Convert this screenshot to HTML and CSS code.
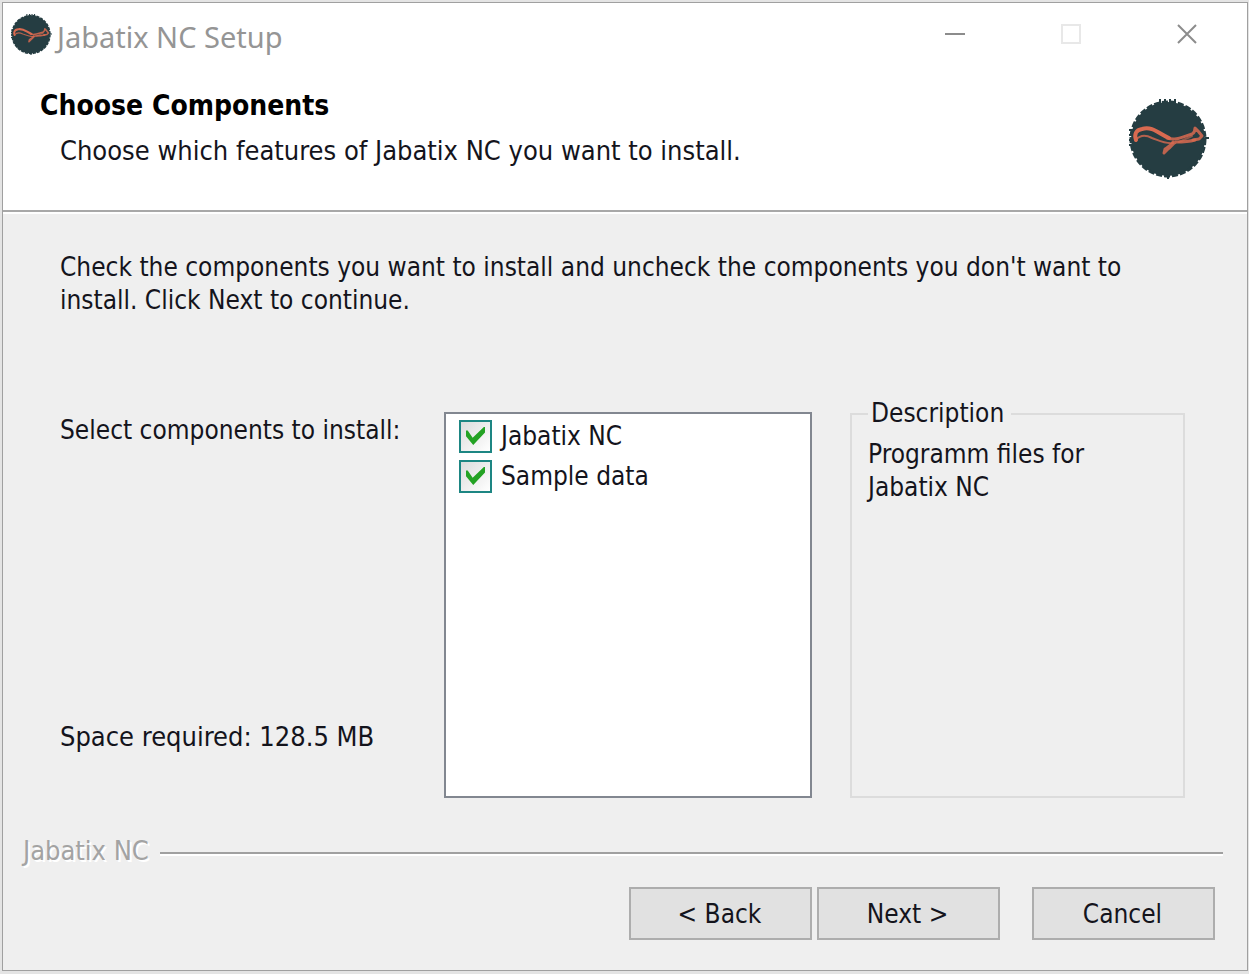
FILE: index.html
```html
<!DOCTYPE html>
<html lang="en">
<head>
  <meta charset="UTF-8">
  <meta name="viewport" content="width=device-width, initial-scale=1.0">
  <title>Jabatix NC Setup</title>
  <link rel="stylesheet" href="styles.css">
</head>
<body>
  <svg class="defs" aria-hidden="true">
    <symbol id="logo" viewBox="0 0 80 80">
      <circle cx="39" cy="40" r="37" fill="#253d42"/>
      <circle cx="39" cy="40" r="37" fill="none" stroke="#253d42" stroke-width="3" stroke-dasharray="6 2"/>
      <path stroke="#253d42" stroke-width="2" d="M31 0v4M36 0v4M41 0v4M46 0v4M0 31h4M0 36h4M0 41h4M0 46h4M76 39h4M39 76v4"/>
      <g fill="none" stroke="#d96a50" stroke-linecap="round" stroke-linejoin="round">
        <path stroke-width="4" d="M7 41c-2-6 0-10 6-11 11-3 17 5 27 9"/>
        <path stroke-width="2" d="M7 41c4-5 10-5 16-2 8 3 13 6 21 5" opacity=".8"/>
        <path stroke-width="3" d="M38 39c9 3 15-1 25-4 2-1 3-3 3-6l3 3 4 5-3 3-6 1" opacity=".85"/>
        <path stroke-width="3" d="M66 41c-7 2-13 2-19 2-3 1-5 5-8 7l-4 4 1-4c3-2 7-4 8-7" opacity=".85"/>
        <path stroke-width="2" d="M50 43l13-6" opacity=".6"/>
      </g>
    </symbol>
  </svg>

  <div class="window">
    <div class="titlebar">
      <svg class="titlebar-icon"><use href="#logo"/></svg>
      <span class="titlebar-text">Jabatix NC Setup</span>
      <button class="caption-btn" type="button" aria-label="Minimize">
        <svg viewBox="0 0 20 20"><path d="M0 10h20"/></svg>
      </button>
      <button class="caption-btn" type="button" aria-label="Maximize" disabled>
        <svg viewBox="0 0 20 20"><path d="M1 1h18v18H1z"/></svg>
      </button>
      <button class="caption-btn" type="button" aria-label="Close">
        <svg viewBox="0 0 20 20"><path d="M1 1l18 18M19 1L1 19"/></svg>
      </button>
    </div>

    <div class="header">
      <div>
        <h1>Choose Components</h1>
        <p>Choose which features of Jabatix NC you want to install.</p>
      </div>
      <svg class="header-logo"><use href="#logo"/></svg>
    </div>

    <div class="content">
      <p class="intro">Check the components you want to install and uncheck the components you don't want to install. Click Next to continue.</p>
      <div class="columns">
        <div class="info">
          <p id="list-label">Select components to install:</p>
          <p class="space">Space required: 128.5 MB</p>
        </div>
        <div class="list" role="group" aria-labelledby="list-label">
          <label><input type="checkbox" checked>Jabatix NC</label>
          <label><input type="checkbox" checked>Sample data</label>
        </div>
        <fieldset class="description">
          <legend>Description</legend>
          <p>Programm files for Jabatix NC</p>
        </fieldset>
      </div>
    </div>

    <div class="branding"><span>Jabatix NC</span></div>

    <div class="buttons">
      <button class="btn" type="button">&lt; Back</button>
      <button class="btn" type="button">Next &gt;</button>
      <button class="btn btn-cancel" type="button">Cancel</button>
    </div>
  </div>
</body>
</html>
```
FILE: styles.css
```css
* {
  box-sizing: border-box;
}

body {
  margin: 0;
  padding: 2px 1px 3px 2px;
  min-height: 100vh;
  display: flex;
  background: #e4e4e4;
  font-family: "DejaVu Sans Condensed", "DejaVu Sans", sans-serif;
  font-size: 26px;
  line-height: 33px;
  color: #14141c;
}

h1,
p {
  margin: 0;
}

.defs {
  position: absolute;
  width: 0;
  height: 0;
}

.window {
  flex: 1;
  display: flex;
  flex-direction: column;
  border: 1px solid #a0a0a0;
  background: #efefef;
}

.titlebar {
  display: flex;
  height: 64px;
  padding-left: 8px;
  background: #fff;
}

.titlebar-icon {
  width: 41px;
  height: 41px;
  margin-top: 11px;
}

.titlebar-text {
  flex: 1;
  padding: 16px 0 0 5px;
  font-family: "Noto Sans", sans-serif;
  font-size: 29px;
  line-height: 36px;
  color: #959595;
}

.caption-btn {
  width: 116px;
  padding: 0 4px 0 0;
  border: 0;
  background: none;
}

.caption-btn svg {
  width: 20px;
  height: 20px;
  fill: none;
  stroke: #8c8c8c;
  stroke-width: 2;
}

.caption-btn:disabled svg {
  stroke: #e8e8e8;
}

.header {
  display: flex;
  justify-content: space-between;
  height: 143px;
  padding: 22px 38px 0 37px;
  background: #fff;
}

.header h1 {
  font-size: 28px;
  line-height: 33px;
  color: #000;
}

.header p {
  padding: 12px 0 0 20px;
  font-size: 27px;
}

.header-logo {
  width: 80px;
  height: 80px;
  margin-top: 10px;
}

.content {
  flex: 1;
  display: flex;
  flex-direction: column;
  padding: 39px 62px 0 57px;
  border-top: 2px solid #a8a8a8;
  box-shadow: inset 0 2px #fff;
}

.intro {
  padding-right: 20px;
}

.columns {
  flex: 1;
  display: grid;
  grid-template-columns: 346fr 368fr 335fr;
  column-gap: 38px;
  margin-top: 95px;
}

.info {
  display: flex;
  flex-direction: column;
  justify-content: space-between;
  margin-right: -38px;
  padding: 2px 0 45px;
}

.space {
  font-size: 27px;
}

.list {
  padding: 2px 13px;
  border: 2px solid #828790;
  background: #fff;
}

.list label {
  display: flex;
  align-items: center;
  height: 40px;
}

.list input {
  appearance: none;
  width: 33px;
  height: 33px;
  margin: 0 9px 0 0;
  border: 2px solid #1d8683;
  background: linear-gradient(135deg, #dcdcdc, #fff);
  display: grid;
  place-items: center;
}

.list input:checked::before {
  content: "";
  width: 19px;
  height: 18px;
  background: #23a223;
  clip-path: polygon(0 20%, 9% 20%, 35% 60%, 94% 0, 100% 0, 100% 30%, 38% 100%, 0 52%);
}

.description {
  margin: -15px 0 0;
  padding: 0 16px;
  border: 2px solid #dcdcdc;
}

.description legend {
  padding: 0 7px 0 3px;
}

.description p {
  padding-top: 8px;
}

.branding {
  display: flex;
  align-items: center;
  gap: 11px;
  margin: 36px 24px 0 20px;
  font-size: 27px;
  color: #a3a3a3;
  text-shadow: 2px 2px #fff;
}

.branding::after {
  content: "";
  flex: 1;
  height: 2px;
  margin-top: 5px;
  background: #a0a0a0;
  box-shadow: 0 2px #fff;
}

.buttons {
  display: flex;
  justify-content: flex-end;
  gap: 5px;
  padding: 20px 32px 30px;
}

.btn {
  width: 183px;
  height: 53px;
  padding: 2px 2px 0 0;
  border: 2px solid #adadad;
  background: #e1e1e1;
  font: inherit;
  color: inherit;
}

.btn-cancel {
  margin-left: 27px;
}
```
